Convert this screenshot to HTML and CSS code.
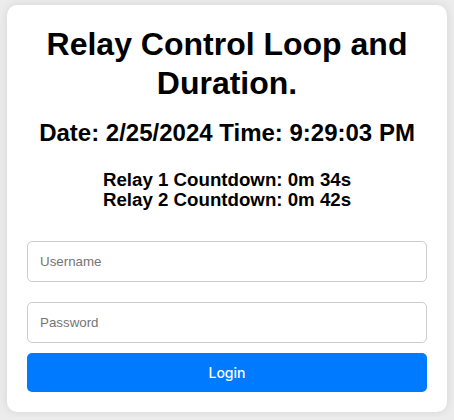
FILE: index.html
```html
<!DOCTYPE html>
<html>
<head>
<meta charset="utf-8">
<link rel="stylesheet" href="styles.css">
</head>
<body>
<div class="card">
  <h1 class="title">Relay Control Loop and Duration.</h1>
  <h2 class="datetime">Date: 2/25/2024 Time: 9:29:03 PM</h2>
  <div class="countdowns">
    <div class="countdown">Relay 1 Countdown: 0m 34s</div>
    <div class="countdown">Relay 2 Countdown: 0m 42s</div>
  </div>
  <form class="login">
    <input class="field" type="text" placeholder="Username">
    <input class="field" type="password" placeholder="Password">
    <button class="btn" type="button">Login</button>
  </form>
</div>
</body>
</html>
```

FILE: styles.css
```css
html, body {
  margin: 0;
  padding: 0;
}
body {
  background: #ececec;
  font-family: "Liberation Sans", Arial, sans-serif;
  color: #000;
  padding: 5px 7px;
}
.card {
  box-sizing: border-box;
  width: 440px;
  background: #fff;
  border-radius: 10px;
  box-shadow: 0 0 10px rgba(0, 0, 0, 0.1);
  padding: 20px;
  text-align: center;
}
.title {
  font-size: 32px;
  font-weight: bold;
  line-height: 39px;
  margin: 0;
}
.datetime {
  font-size: 24px;
  font-weight: bold;
  line-height: 28px;
  margin: 16px 0 0;
}
.countdowns {
  margin-top: 23px;
}
.countdown {
  font-size: 18.7px;
  font-weight: bold;
  line-height: 19.5px;
}
.login {
  display: flex;
  flex-direction: column;
  margin-top: 32px;
}
.field {
  box-sizing: border-box;
  width: 100%;
  height: 41px;
  border: 1px solid #ccc;
  border-radius: 5px;
  padding: 0 12px;
  font-family: "Liberation Sans", Arial, sans-serif;
  font-size: 13.33px;
  color: #000;
  background: #fff;
  margin-bottom: 20px;
}
.field + .field {
  margin-bottom: 10px;
}
.field::placeholder {
  color: #757575;
}
.btn {
  height: 39px;
  border: none;
  border-radius: 5px;
  background: #007bff;
  color: #fff;
  font-family: Inter, "Liberation Sans", sans-serif;
  font-size: 14px;
  font-weight: 500;
}
```
